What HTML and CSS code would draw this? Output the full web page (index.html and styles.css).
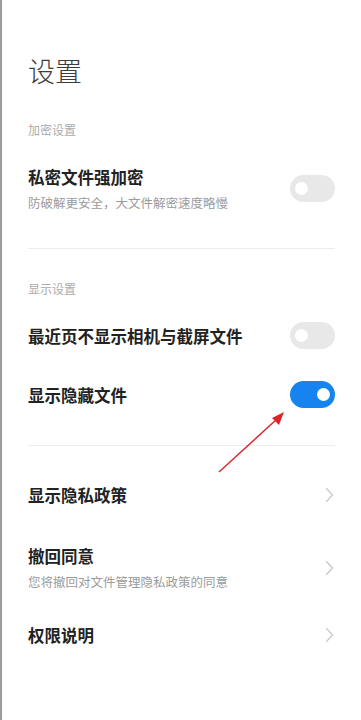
FILE: index.html
```html
<!Doctype html>
<html>
    <head>
        <title>设置</title>
        <meta charset="utf-8">
        <link rel="stylesheet" href="styles.css">
    </head>
    <body>
        <div class='page'>
            <h1 class='page-title'>设置</h1>

            <!-- 加密设置 -->
            <div class='section-header'>加密设置</div>
            <div class='row'>
                <div class='row-text'>
                    <div class='row-title'>私密文件强加密</div>
                    <div class='row-sub'>防破解更安全，大文件解密速度略慢</div>
                </div>
                <div class='toggle'><div class='knob'></div></div>
            </div>

            <div class='divider'></div>

            <!-- 显示设置 -->
            <div class='section-header second'>显示设置</div>
            <div class='row'>
                <div class='row-text'>
                    <div class='row-title'>最近页不显示相机与截屏文件</div>
                </div>
                <div class='toggle'><div class='knob'></div></div>
            </div>
            <div class='row'>
                <div class='row-text'>
                    <div class='row-title'>显示隐藏文件</div>
                </div>
                <div class='toggle on'><div class='knob'></div></div>
            </div>

            <div class='divider last'></div>

            <!-- 其它 -->
            <div class='row'>
                <div class='row-text'>
                    <div class='row-title'>显示隐私政策</div>
                </div>
                <svg class='chevron' width='9' height='16' viewBox='0 0 9 16'><path d='M1.5 1.5 L7.5 8 L1.5 14.5' fill='none' stroke='#c8c8c8' stroke-width='1.2' stroke-linecap='round' stroke-linejoin='round'/></svg>
            </div>
            <div class='row tall'>
                <div class='row-text'>
                    <div class='row-title'>撤回同意</div>
                    <div class='row-sub'>您将撤回对文件管理隐私政策的同意</div>
                </div>
                <svg class='chevron' width='9' height='16' viewBox='0 0 9 16'><path d='M1.5 1.5 L7.5 8 L1.5 14.5' fill='none' stroke='#c8c8c8' stroke-width='1.2' stroke-linecap='round' stroke-linejoin='round'/></svg>
            </div>
            <div class='row'>
                <div class='row-text'>
                    <div class='row-title'>权限说明</div>
                </div>
                <svg class='chevron' width='9' height='16' viewBox='0 0 9 16'><path d='M1.5 1.5 L7.5 8 L1.5 14.5' fill='none' stroke='#c8c8c8' stroke-width='1.2' stroke-linecap='round' stroke-linejoin='round'/></svg>
            </div>

            <!-- red arrow drawn over the page -->
            <svg class='arrow' width='361' height='720' viewBox='0 0 361 720'>
                <line x1='219' y1='472' x2='277' y2='419' stroke='#d8262b' stroke-width='1.4'/>
                <polygon points='284,412 272,418 279,425' fill='#d8262b'/>
            </svg>
        </div>
    </body>
</html>
```

FILE: styles.css
```css
/* page */
body {
    margin: 0;
    background: #fff;
    font-family: "Noto Sans CJK SC", "Noto Sans", sans-serif;
}

.page {
    position: relative;
    width: 361px;
    height: 720px;
    box-sizing: border-box;
    border-left: 2px solid #9c9c9c;
    padding: 51px 26px 0 26px;
    overflow: hidden;
}

.page-title {
    margin: 0 0 29px 0;
    font-size: 27px;
    line-height: 40px;
    font-weight: 300;
    color: #3c3c3c;
}

.section-header {
    font-size: 12px;
    line-height: 20px;
    color: #ababab;
    margin-bottom: 9px;
}

.section-header.second {
    margin-top: 30px;
    margin-bottom: 7px;
}

.row {
    display: flex;
    align-items: center;
    justify-content: space-between;
    box-sizing: border-box;
    min-height: 59px;
    padding: 16px 0;
}

.row.tall {
    padding: 20px 0 14px 0;
}

.row-text {
    display: flex;
    flex-direction: column;
    gap: 5px;
}

.row-title {
    font-size: 16.5px;
    line-height: 24px;
    font-weight: 700;
    color: #222;
}

.row-sub {
    font-size: 12.5px;
    line-height: 18px;
    color: #9b9b9b;
}

.divider {
    height: 1px;
    background: #ededed;
    margin-top: 20px;
}

.divider.last {
    margin-top: 21px;
    margin-bottom: 19px;
}

/* switch */
.toggle {
    width: 45px;
    height: 27px;
    box-sizing: border-box;
    border-radius: 14px;
    background: #e8e8e8;
    display: flex;
    align-items: center;
    padding: 0 5px;
    flex-shrink: 0;
}

.toggle .knob {
    width: 13px;
    height: 13px;
    border-radius: 50%;
    background: #fff;
}

.toggle.on {
    background: #1683ee;
    justify-content: flex-end;
}

.chevron {
    flex-shrink: 0;
    margin-right: 1px;
}

.arrow {
    position: absolute;
    left: -2px;
    top: 0;
    pointer-events: none;
}
```
